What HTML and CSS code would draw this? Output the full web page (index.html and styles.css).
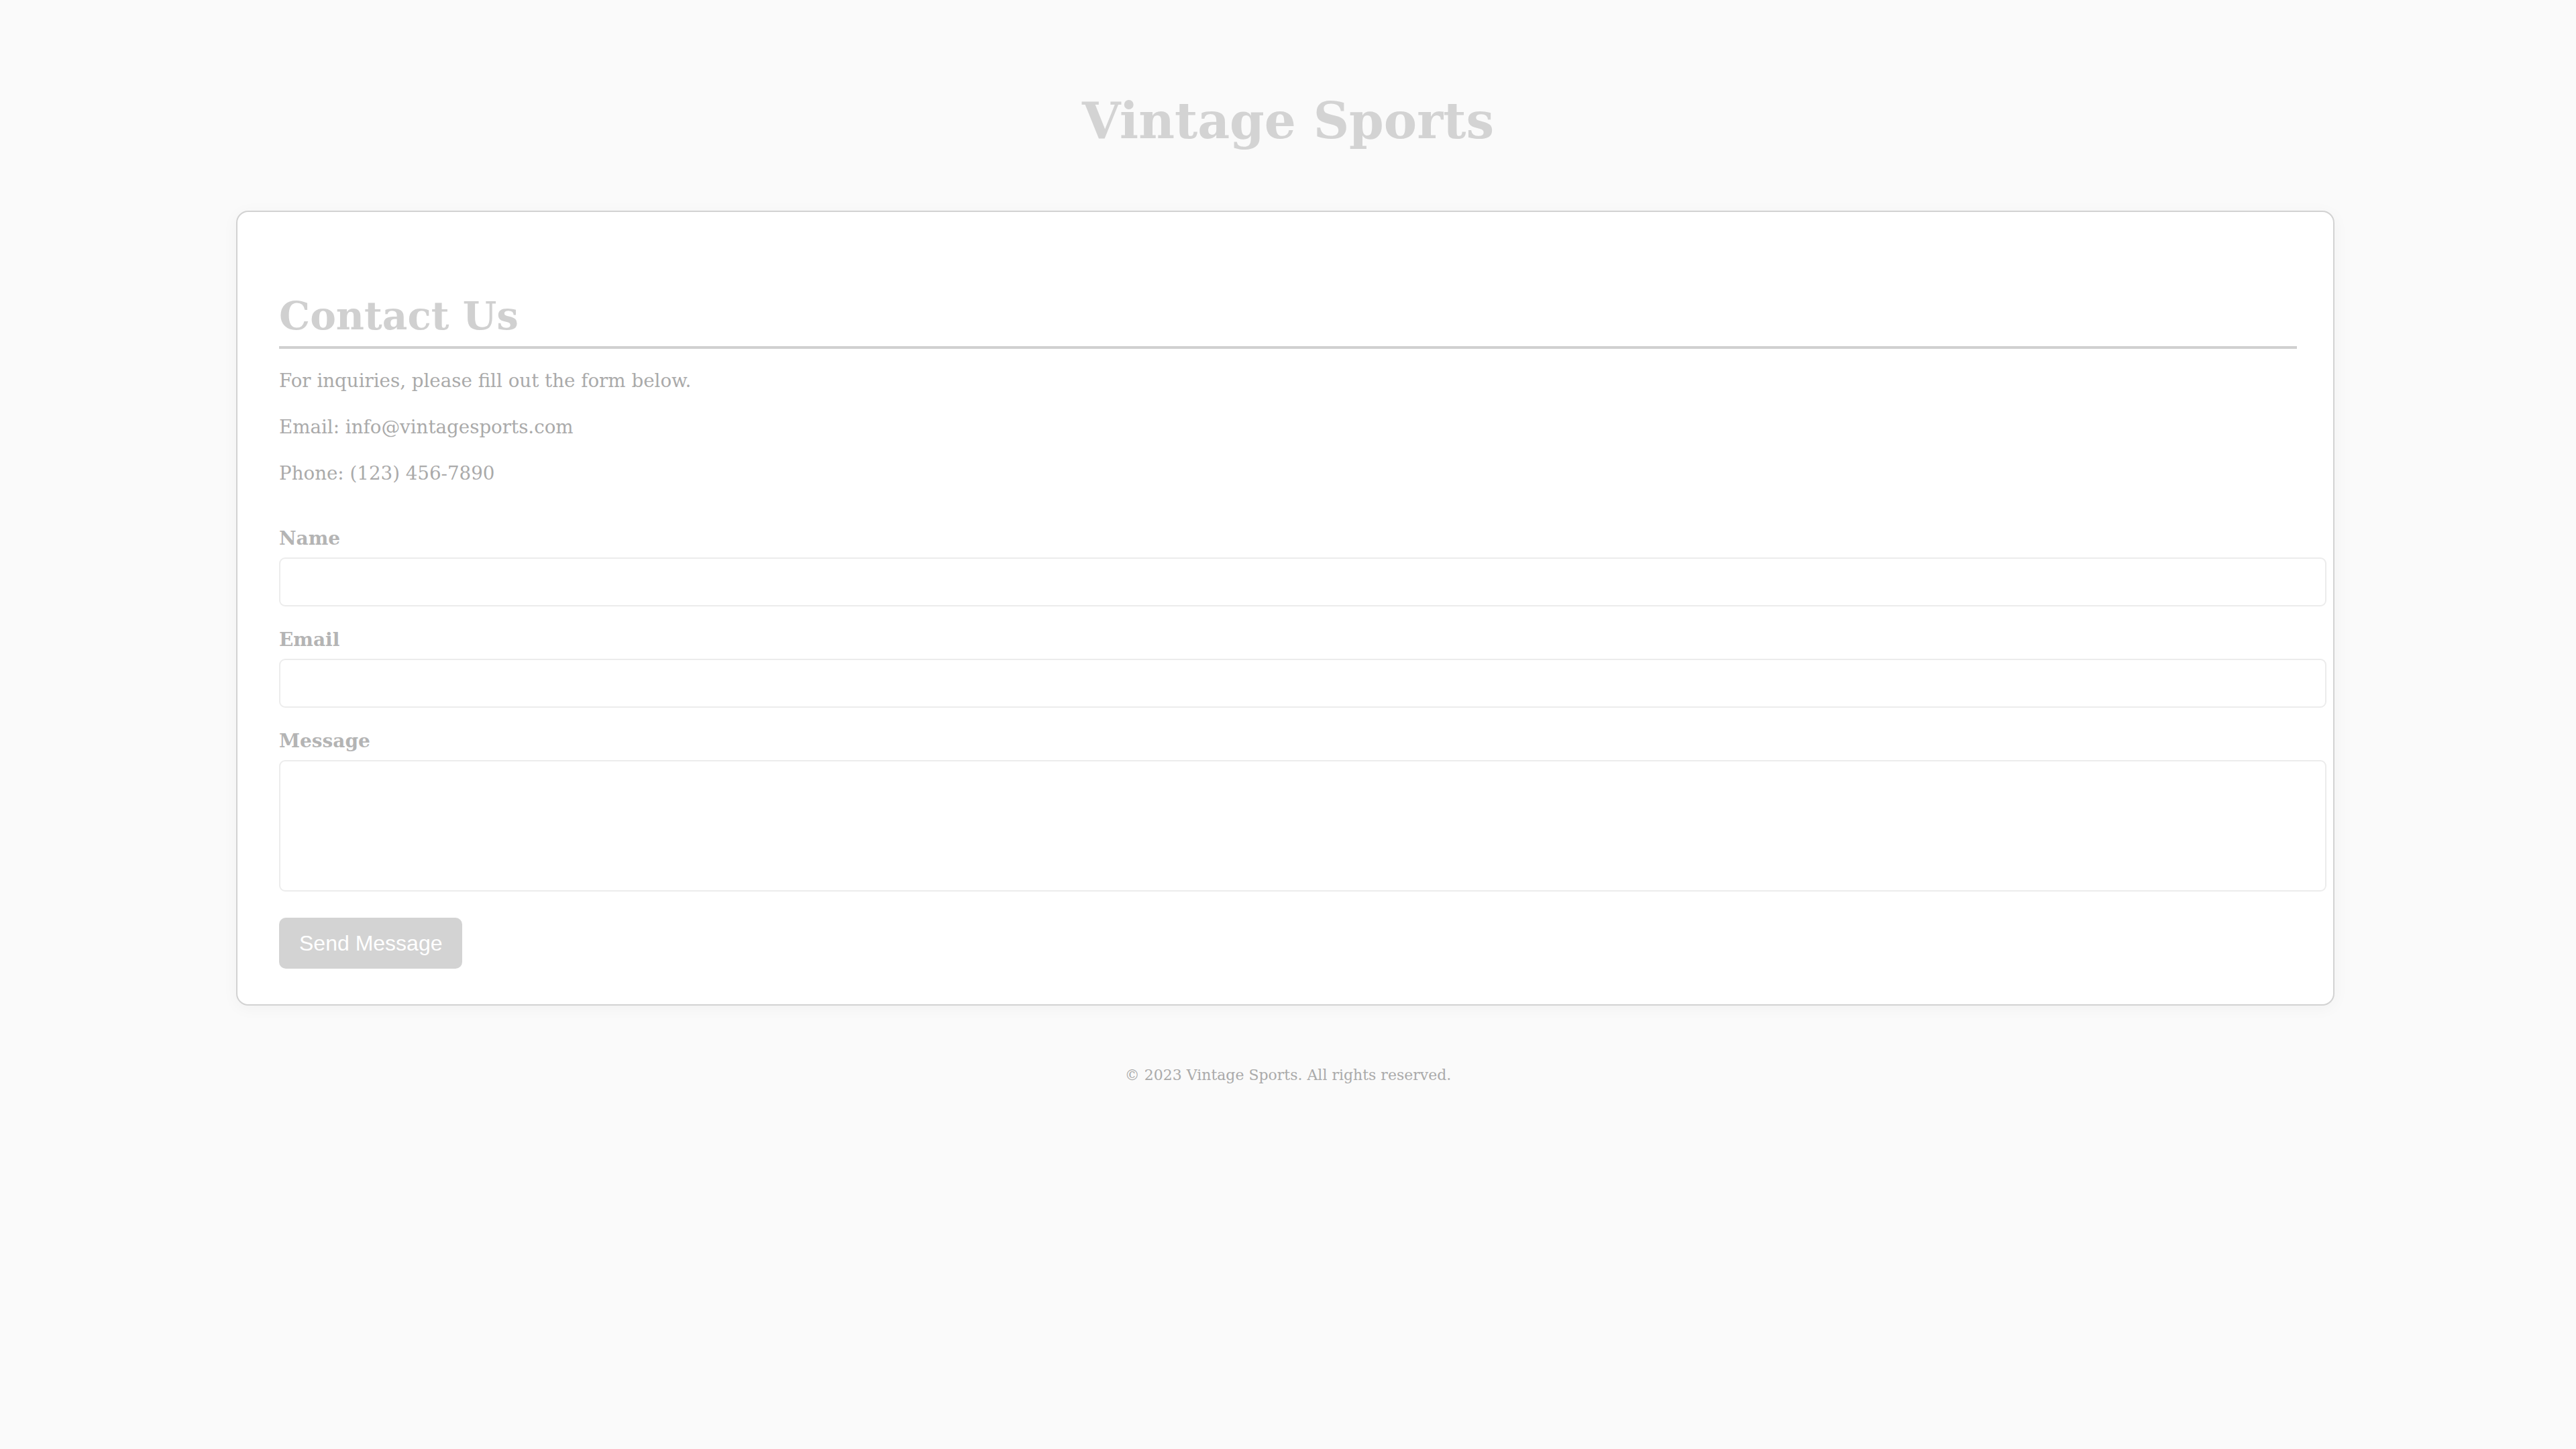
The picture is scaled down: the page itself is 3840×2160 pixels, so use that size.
FILE: index.html
```html
<!DOCTYPE html>
<html lang="en">
<head>
<meta charset="utf-8">
<title>Vintage Sports - Contact</title>
<link rel="stylesheet" href="styles.css">
</head>
<body>
  <header class="site-header">
    <h1 class="site-title">Vintage Sports</h1>
  </header>
  <main class="card">
    <h2 class="card-title">Contact Us</h2>
    <p class="info">For inquiries, please fill out the form below.</p>
    <p class="info">Email: info@vintagesports.com</p>
    <p class="info">Phone: (123) 456-7890</p>
    <form class="contact-form">
      <label class="field-label" for="name">Name</label>
      <input class="field" type="text" id="name">
      <label class="field-label" for="email">Email</label>
      <input class="field" type="email" id="email">
      <label class="field-label" for="message">Message</label>
      <textarea class="field field-area" id="message"></textarea>
      <button class="send-btn" type="submit">Send Message</button>
    </form>
  </main>
  <footer class="site-footer">
    <p class="copyright">© 2023 Vintage Sports. All rights reserved.</p>
  </footer>
</body>
</html>
```

FILE: styles.css
```css
* {
  box-sizing: border-box;
}

html, body {
  margin: 0;
  padding: 0;
}

body {
  background: #fafafa;
  font-family: "DejaVu Serif", "Liberation Serif", serif;
  color: #adadad;
}

.site-header {
  padding: 136px 0 90px;
  text-align: center;
}

.site-title {
  margin: 0;
  font-size: 74px;
  line-height: 88px;
  font-weight: bold;
  color: #d3d3d3;
}

.card {
  width: 3128px;
  margin: 0 0 0 calc(50% - 1568px);
  background: #ffffff;
  border: 2px solid #d2d2d2;
  border-radius: 18px;
  box-shadow: 0 4px 24px rgba(0, 0, 0, 0.04);
  padding: 62px 54px 53px 62px;
}

.card-title {
  margin: 57px 0 0;
  font-size: 58px;
  line-height: 72px;
  font-weight: bold;
  color: #d0d0d0;
  padding-bottom: 9px;
  border-bottom: 4px solid #d0d0d0;
}

.info {
  margin: 30px 0 0;
  font-size: 27.7px;
  line-height: 36px;
  color: #aaaaaa;
}

.info + .info {
  margin-top: 33px;
}

.contact-form {
  display: flex;
  flex-direction: column;
  align-items: flex-start;
  padding-top: 61px;
}

.field-label {
  display: block;
  font-size: 28px;
  line-height: 36px;
  font-weight: bold;
  color: #b4b4b4;
  margin-bottom: 10px;
}

.field {
  width: calc(100% + 44px);
  height: 73px;
  border: 2px solid #ececec;
  border-radius: 9px;
  background: #ffffff;
  padding: 20px;
  font-family: "Liberation Sans", Arial, sans-serif;
  font-size: 27px;
  margin-bottom: 32px;
  outline: none;
}

.field-area {
  height: 196px;
  resize: none;
  margin-bottom: 39px;
}

.send-btn {
  height: 76px;
  padding: 0 30px;
  border: none;
  border-radius: 10px;
  background: #d3d3d3;
  color: #ffffff;
  font-family: "Liberation Sans", Arial, sans-serif;
  font-size: 32px;
  cursor: pointer;
}

.site-footer {
  padding-top: 88px;
  text-align: center;
}

.copyright {
  margin: 0;
  font-size: 22px;
  line-height: 32px;
  color: #aaaaaa;
}
```
